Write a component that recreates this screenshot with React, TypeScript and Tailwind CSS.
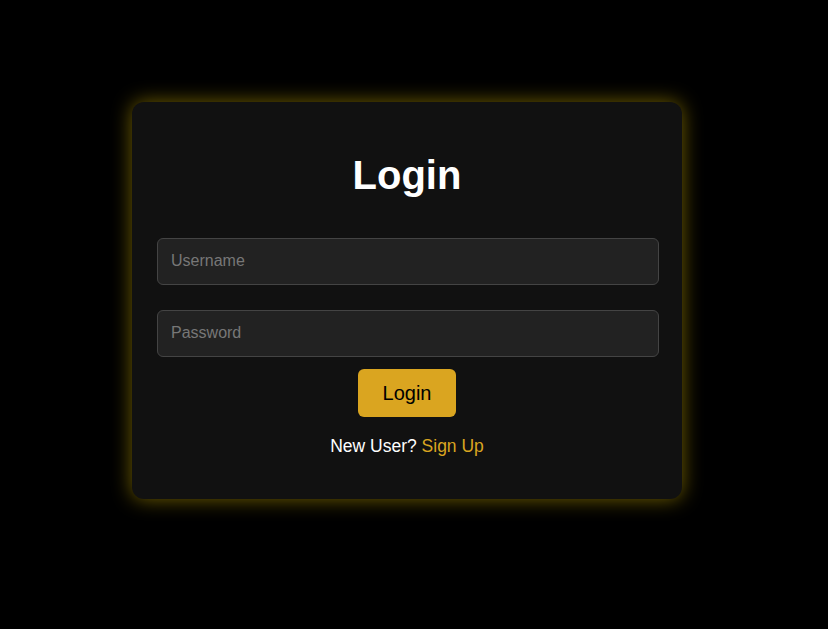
export default function App() {
  return (
    <div className="h-screen w-full bg-black pl-[132px] pt-[102px] font-['Liberation_Sans',Arial,sans-serif]">
      <div className="flex h-[397px] w-[550px] flex-col items-start rounded-xl bg-[#111] pl-[25px] pt-[50px] shadow-[0_0_20px_rgba(255,215,0,0.45)]">
        <h1 className="w-[500px] text-center text-[40px] font-bold leading-[46px] text-white">
          Login
        </h1>
        <form className="mt-[40px] flex w-[500px] flex-col items-start">
          <input
            type="text"
            placeholder="Username"
            className="h-[47px] w-[502px] rounded-md border border-[#444] bg-[#222] px-[13px] pb-[1px] text-base text-white outline-none placeholder:text-[#777]"
          />
          <input
            type="password"
            placeholder="Password"
            className="mt-[25px] h-[47px] w-[502px] rounded-md border border-[#444] bg-[#222] px-[13px] pb-[1px] text-base text-white outline-none placeholder:text-[#777]"
          />
          <button
            type="button"
            className="mt-[12px] h-[48px] w-[98px] self-center rounded-md bg-[#daa520] text-[20px] text-black"
          >
            Login
          </button>
          <p className="mt-[19px] self-center text-[17.5px] leading-[21px] text-white">
            New User? <a className="text-[#daa520]">Sign Up</a>
          </p>
        </form>
      </div>
    </div>
  );
}
